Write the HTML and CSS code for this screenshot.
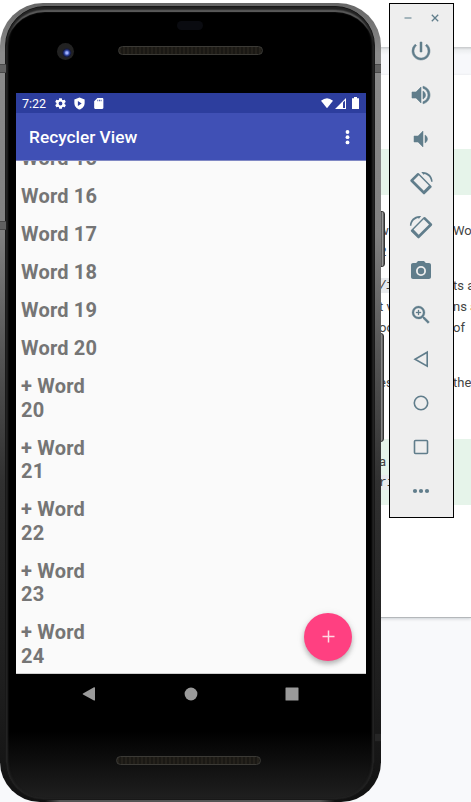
FILE: index.html
```html
<!DOCTYPE html>
<html lang="en">
<head>
<meta charset="utf-8">
<title>Recycler View</title>
<link rel="stylesheet" href="styles.css">
</head>
<body>
<div class="desktop">
  <div class="doc">
    <div class="doc-head"></div>
    <div class="doc-gap"></div>
    <div class="doc-card">
      <div class="note note-top"></div>
      <div class="line l1"><span class="a">w</span><span class="b">Wo</span></div>
      <div class="line l2"><span class="a mono">2</span></div>
      <div class="line l3"><span class="a mono code">/i</span><span class="b">ts a</span></div>
      <div class="line l4"><span class="a">t v</span><span class="b">ns a</span></div>
      <div class="line l5"><span class="a">oo</span><span class="b">of</span></div>
      <div class="line l6"><span class="a">es</span><span class="b">the</span></div>
      <div class="note note-low">
        <div class="line"><span class="a">a o</span></div>
        <div class="line"><span class="a mono code">ri</span></div>
      </div>
    </div>
  </div>

  <div class="key key-power"></div>
  <div class="key key-volume"></div>
  <div class="phone">
    <i class="band b1"></i><i class="band b2"></i><i class="band b3"></i><i class="band b4"></i>
    <div class="glass">
      <div class="top-bezel">
        <i class="camera"></i><i class="sensor"></i><i class="speaker"></i>
      </div>
      <div class="screen">
        <div class="status">
          <span class="time">7:22</span>
          <svg width="13" height="13" viewBox="0 0 24 24"><path fill="#fff" d="M19.4 13a7.500 7.500 0 0 0 0-2l2.100-1.600a.5.500 0 0 0 .1-.6l-2-3.500a.5.500 0 0 0-.6-.2l-2.500 1a7.300 7.300 0 0 0-1.700-1l-.4-2.600a.5.500 0 0 0-.5-.4h-4a.5.500 0 0 0-.5.400L9.200 5.100a7.700 7.700 0 0 0-1.700 1L5 5.100a.5.500 0 0 0-.6.200l-2 3.500a.5.500 0 0 0 .1.600L4.600 11a7.900 7.900 0 0 0 0 2l-2.100 1.600a.5.500 0 0 0-.1.600l2 3.500c.1.200.4.300.6.200l2.500-1c.5.400 1.100.7 1.700 1l.4 2.600c0 .3.200.4.500.4h4c.2 0 .5-.2.500-.4l.4-2.600a7.300 7.300 0 0 0 1.700-1l2.500 1c.2.100.5 0 .6-.2l2-3.500a.5.500 0 0 0-.1-.6zM12 15.500a3.500 3.500 0 1 1 0-7 3.500 3.500 0 0 1 0 7z"/></svg>
          <svg width="13" height="13" viewBox="0 0 24 24"><path fill="#fff" fill-rule="evenodd" d="M12 1 2.500 4.500V11c0 5.600 4 10.700 9.500 12 5.500-1.300 9.500-6.400 9.500-12V4.500zM9 7.500l7 4.500-7 4.500z"/></svg>
          <svg width="13" height="13" viewBox="0 0 24 24"><path fill="#fff" fill-rule="evenodd" d="M19 2h-9L4 8v12c0 1.100.9 2 2 2h13c1.100 0 2-.9 2-2V4c0-1.100-.9-2-2-2zM10 5h1.500v3H10zm3 0h1.500v3H13zm3 0h1.500v3H16z"/></svg>
          <span class="signals">
            <svg width="12" height="11" viewBox="0 0 12 11"><path fill="#fff" d="M0 2.800Q6-2.400 12 2.800L6 10.300z"/></svg>
            <svg width="11" height="11" viewBox="0 0 11 11"><path fill="#fff" fill-rule="evenodd" d="M11 0v11H0zM8 4.500V10h2V2.500z"/></svg>
            <svg class="battery" width="7" height="12" viewBox="0 0 7 12"><path fill="#fff" d="M2 0h3v1.200h2V12H0V1.200h2z"/></svg>
          </span>
        </div>
        <div class="appbar"><span class="title">Recycler View</span>
          <svg width="5" height="15" viewBox="0 0 5 15" fill="#fff"><circle cx="2.500" cy="2" r="1.900"/><circle cx="2.500" cy="7.200" r="1.900"/><circle cx="2.500" cy="12.400" r="1.900"/></svg>
        </div>
        <div class="list">
          <div class="word">Word 15</div>
          <div class="word">Word 16</div>
          <div class="word">Word 17</div>
          <div class="word">Word 18</div>
          <div class="word">Word 19</div>
          <div class="word">Word 20</div>
          <div class="word">+ Word<br>20</div>
          <div class="word">+ Word<br>21</div>
          <div class="word">+ Word<br>22</div>
          <div class="word">+ Word<br>23</div>
          <div class="word">+ Word<br>24</div>
        </div>
        <div class="fab"><svg width="13" height="13" viewBox="0 0 13 13"><path d="M6.500.5v12M.5 6.500h12" stroke="#ffd9e4" stroke-width="1.500"/></svg></div>
      </div>
      <div class="nav">
        <svg width="14" height="14" viewBox="0 0 14 14"><path fill="#9a9a9a" d="M1 6.500 12 .3q1-.3 1 .6v12q0 1-1 .6L1 7.500q-.8-.5 0-1z"/></svg>
        <svg width="14" height="14" viewBox="0 0 14 14"><circle cx="7" cy="7" r="6.400" fill="#9a9a9a"/></svg>
        <svg width="14" height="14" viewBox="0 0 14 14"><rect x=".5" y=".5" width="13" height="13" rx=".5" fill="#9a9a9a"/></svg>
      </div>
      <div class="chin"><i class="speaker"></i></div>
    </div>
  </div>

  <div class="tools">
    <div class="window-buttons">
      <svg width="8" height="8" viewBox="0 0 8 8"><path d="M.5 4h7" stroke="#9aadb5" stroke-width="1.800"/></svg>
      <svg width="8" height="8" viewBox="0 0 8 8"><path d="m.8.8 6.400 6.400m0-6.400L.8 7.200" stroke="#607d8b" stroke-width="1.300"/></svg>
    </div>
    <div class="tool"><svg viewBox="0 0 24 24"><path d="M13 3h-2v10h2zm4.830 2.170-1.420 1.420A6.920 6.920 0 0 1 19 12a7 7 0 1 1-11.420-5.420L6.170 5.170A8.930 8.930 0 0 0 3 12a9 9 0 1 0 14.830-6.830z" stroke="#607d8b" stroke-width=".5"/></svg></div>
    <div class="tool"><svg viewBox="0 0 24 24"><path d="M3 9v6h4l5 5V4L7 9zm13.500 3A4.500 4.500 0 0 0 14 7.970v8.050c1.480-.73 2.500-2.250 2.500-4.020zM14 3.230v2.060c2.890.86 5 3.540 5 6.710s-2.110 5.850-5 6.710v2.060c4.010-.91 7-4.490 7-8.770s-2.990-7.860-7-8.770z" stroke="#607d8b" stroke-width=".6"/></svg></div>
    <div class="tool"><svg viewBox="0 0 24 24"><path d="M18.500 12A4.500 4.500 0 0 0 16 7.970v8.050A4.470 4.470 0 0 0 18.500 12zM5 9v6h4l5 5V4L9 9z" stroke="#607d8b" stroke-width=".5"/></svg></div>
    <div class="tool"><svg viewBox="0 0 24 24"><g transform="translate(24.500 0) scale(-1 1)"><path id="turn" fill-rule="evenodd" d="M14.700 2.300q.8-.8 1.600 0l6.600 6.500q.7.800 0 1.600L10.300 23q-.8.800-1.600 0l-6.600-6.500q-.7-.8 0-1.600zM14.700 4.300 4.600 14.500l5.100 5.200L20 9.400zM.9 10.800C.9 5.300 5 1.200 10.500 1.100h1.700L10 3.700 8.900 2.900C5.200 4 2.600 6.800 2.400 10.800z"/></g></svg></div>
    <div class="tool"><svg viewBox="0 0 24 24"><use href="#turn"/></svg></div>
    <div class="tool"><svg viewBox="0 0 24 24"><circle cx="12" cy="12" r="3.200"/><path d="M9 2 7.170 4H4c-1.100 0-2 .9-2 2v12c0 1.100.9 2 2 2h16c1.100 0 2-.9 2-2V6c0-1.100-.9-2-2-2h-3.170L15 2zm3 15a5 5 0 1 1 0-10 5 5 0 0 1 0 10z"/></svg></div>
    <div class="tool"><svg viewBox="0 0 24 24"><path d="M15.500 14h-.79l-.28-.27A6.470 6.470 0 0 0 16 9.500 6.500 6.500 0 1 0 9.500 16c1.610 0 3.090-.59 4.230-1.570l.27.280v.79l5 4.990L20.490 19zm-6 0a4.500 4.500 0 1 1 0-9 4.500 4.500 0 0 1 0 9zM12 10h-2v2H9v-2H7V9h2V7h1v2h2z" stroke="#607d8b" stroke-width=".3"/></svg></div>
    <div class="tool"><svg viewBox="0 0 24 24"><path class="stroke" d="M18.200 5.200v14L6 12.200z"/></svg></div>
    <div class="tool"><svg viewBox="0 0 24 24"><circle class="stroke" cx="12" cy="12" r="6.700"/></svg></div>
    <div class="tool"><svg viewBox="0 0 24 24"><rect class="stroke" x="5.500" y="5.500" width="13" height="13" rx="1"/></svg></div>
    <div class="tool"><svg viewBox="0 0 24 24"><circle cx="6" cy="12" r="2.100"/><circle cx="12" cy="12" r="2.100"/><circle cx="18" cy="12" r="2.100"/></svg></div>
  </div>
</div>
</body>
</html>
```

FILE: styles.css
```css
* { box-sizing: border-box; }
body { margin: 0; background: #f8f9fb; font-family: Roboto, "Liberation Sans", sans-serif; }
.desktop { position: relative; width: 471px; height: 802px; overflow: hidden; }

/* document window behind the emulator */
.doc { height: 802px; color: #444; font-size: 13px; }
.doc-head { height: 47px; background: #fff; }
.doc-gap { height: 28px; background: linear-gradient(#c6c8ca, #eceef0 3px, #f7f8fb 8px); }
.doc-card { height: 543px; background: #fff; border-bottom: 1px solid #b4b7ba; box-shadow: 0 1px 3px #ccd0d4; padding-top: 74px; }
.note { background: #e6f4ea; }
.note-top { height: 46px; margin-bottom: 25px; }
.line { display: grid; grid-template-columns: 74px 1fr; height: 21px; line-height: 21px; padding-left: 379px; white-space: nowrap; }
.l1 { margin-bottom: 1px; }
.l2 { margin-bottom: 12px; }
.l5 { margin-bottom: 34px; }
.l6 { margin-bottom: 46px; }
.note-low { height: 66px; padding-top: 12px; }
.mono { font-family: "Liberation Mono", monospace; }
.code { background: #e8eaed; height: 15px; line-height: 15px; margin-top: 3px; }
.l3 .code { letter-spacing: -1px; }

/* phone */
.phone { position: absolute; left: 0; top: 3px; width: 381px; height: 799px; border-radius: 43px 43px 40px 40px; padding: 3px 6px 2px 5px; background: linear-gradient(90deg, transparent 45px, #555 60px 320px, transparent 335px) bottom / 100% 2px no-repeat, linear-gradient(#666 0, #8b8b8b 50px, #808080 230px, #555 350px, #303030 480px, #1c1c1c 700px, #111); overflow: hidden; }
.glass { height: 794px; border-radius: 40px 40px 38px 38px; background: linear-gradient(transparent 724px, #202020 793px), #000; box-shadow: inset 2px 0 2px #242424, inset -2px 0 2px #242424, inset 0 5px 2px -2px #242424, inset 0 6px 1px -1px #666; border: 1px solid #181818; padding: 0 8px 0 10px; }
.band { position: absolute; width: 6px; height: 9px; background: #606060; border: solid #484848; border-width: 1px 0; }
.b1 { left: 0; top: 61px; }
.b2 { right: 0; top: 61px; }
.b3 { left: 0; top: 218px; }
.b4 { right: 0; top: 730px; background: #262626; border-color: #1a1a1a; }
.key { position: absolute; left: 377px; width: 8px; border-radius: 3px; background: linear-gradient(90deg, #444 50%, #999 75%, #444); border: 1px solid #333; }
.key-power { top: 211px; height: 56px; }
.key-volume { top: 333px; height: 109px; width: 7px; }
.top-bezel { height: 86px; position: relative; }
.camera { position: absolute; left: 41px; top: 36px; width: 17px; height: 17px; border-radius: 50%; background: radial-gradient(circle at 58% 58%, #9fb0ff 0 1px, #3046a0 2.500px, #14183a 4px, #222 5px 8px); }
.sensor { position: absolute; left: 161px; top: 14px; width: 26px; height: 9px; border-radius: 5px; background: #0a0b10; }
.speaker { position: absolute; left: 102px; top: 39px; width: 145px; height: 9px; border-radius: 5px; border: 1px solid #3b3a36; background: repeating-linear-gradient(90deg, #24211b 0 2px, #1a1814 2px 4px); }
.chin { position: relative; }
.chin .speaker { left: 100px; top: 41px; }

.screen { position: relative; width: 350px; height: 581px; background: #fafafa; overflow: hidden; border-bottom: 1px solid #d0d0d0; display: flex; flex-direction: column; }
.status { flex: none; height: 20px; background: #2d3e9e; color: #fff; display: flex; align-items: center; padding: 0 7px 0 6px; }
.time { font-size: 12.500px; width: 32px; }
.status > svg { margin-right: 6px; }
.signals { margin-left: auto; display: flex; align-items: center; gap: 2px; }
.battery { margin-left: 4px; }
.appbar { flex: none; height: 48px; background: #4050b5; border-bottom: 1px solid #8088c4; color: #fff; display: flex; align-items: center; justify-content: space-between; padding: 1px 16px 0 13px; }
.title { font-size: 17.300px; font-weight: 500; }
.list { flex: 1; margin-top: -13.600px; padding-left: 5px; clip-path: inset(13.600px 0 0 0); }
.word { font-size: 20px; font-weight: 700; letter-spacing: .2px; line-height: 23.600px; color: #757575; padding-bottom: 14.350px; }
.fab { position: absolute; left: 288px; top: 519.500px; width: 48px; height: 48px; border-radius: 50%; background: #ff4081; display: flex; align-items: center; justify-content: center; box-shadow: 0 3px 5px rgba(0,0,0,.25), 0 1px 8px rgba(0,0,0,.08); }
.nav { height: 41px; display: flex; align-items: center; justify-content: space-between; padding: 0 67px 1px 66px; }

/* emulator controls */
.tools { position: absolute; left: 389px; top: 3px; width: 65px; height: 515px; background: #eee; border: 1px solid #000; padding-right: 1px; }
.window-buttons { height: 25px; display: flex; justify-content: center; gap: 19px; padding-top: 10px; }
.tool { height: 44px; display: flex; align-items: center; justify-content: center; }
.tool svg { width: 24px; height: 24px; fill: #607d8b; }
.tool .stroke { fill: none; stroke: #607d8b; stroke-width: 1.600; }
```
